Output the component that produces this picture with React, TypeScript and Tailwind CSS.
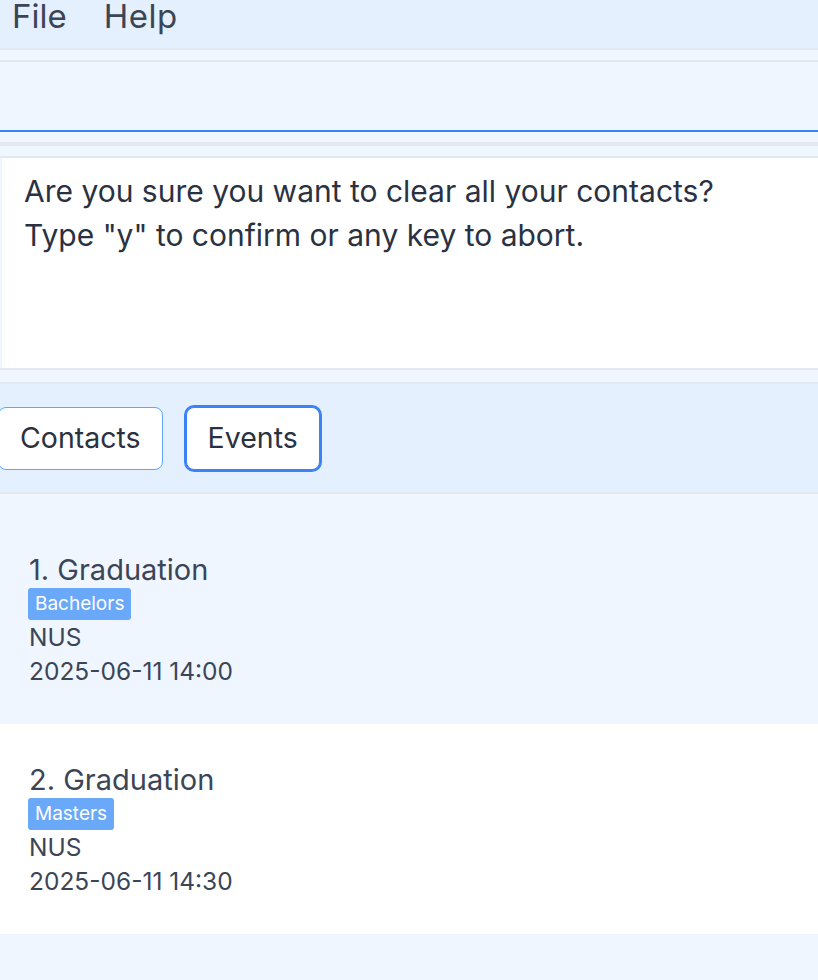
import React from 'react';

interface EventItem {
  title: string;
  tag: string;
  location: string;
  time: string;
}

const events: EventItem[] = [
  { title: 'Graduation', tag: 'Bachelors', location: 'NUS', time: '2025-06-11 14:00' },
  { title: 'Graduation', tag: 'Masters', location: 'NUS', time: '2025-06-11 14:30' },
];

export default function App() {
  return (
    <div
      className="w-[818px] h-[980px] overflow-hidden bg-[#eff6ff] text-[#334155]"
      style={{ fontFamily: 'Inter, "Noto Sans", sans-serif' }}
    >
      {/* menu bar */}
      <div className="h-[50px] bg-[#e4f0fd] border-b-2 border-[#e2e8f0] flex items-start gap-[37px] pl-[12px] text-[33px] leading-[36px] text-[#3b4556]">
        <span className="-mt-[2px]">File</span>
        <span className="-mt-[2px] tracking-[0.5px]">Help</span>
      </div>

      {/* command box */}
      <div className="pt-[10px]">
        <div className="border-t-2 border-[#e2e8f0] h-[72px] bg-[#eff6ff] border-b-2 border-b-[#3b82f6]"></div>
      </div>

      <div className="h-[10px]"></div>
      <div className="h-[4px] bg-[#e2e8f0]"></div>

      {/* result box */}
      <div className="pt-[10px]">
        <div className="border-t-2 border-b-2 border-[#e2e8f0]">
          <div className="h-[210px] bg-white border-l-2 border-[#eff6ff] pl-[22px] pt-[11px] text-[30px] leading-[44px] text-[#2a3242]">
            <div>Are you sure you want to clear all your contacts?</div>
            <div>Type "y" to confirm or any key to abort.</div>
          </div>
        </div>
      </div>

      {/* tabs */}
      <div className="pt-[12px]">
        <div className="border-t-2 border-b-2 border-[#e2e8f0] bg-[#e4f0fd] h-[112px] flex items-center gap-[23px] -ml-[2px]">
          <button className="h-[63px] px-[21px] bg-white border border-[#60a5fa] rounded-[8px] text-[28.5px] text-[#2a3242]">
            Contacts
          </button>
          <button className="h-[63px] px-[21px] bg-white border border-[#3b82f6] ring-2 ring-[#3b82f6] rounded-[8px] text-[28.5px] text-[#2a3242]">
            Events
          </button>
        </div>
      </div>

      {/* event list */}
      <div className="pt-[20px]">
        {events.map((ev, i) => (
          <div
            key={i}
            className={`h-[210px] pl-[29px] pt-[38px] ${i % 2 === 0 ? 'bg-[#eff6ff]' : 'bg-white'}`}
          >
            <div className="text-[29px] leading-[35px] text-[#3b4556]">
              {i + 1}. {ev.title}
            </div>
            <div className="mt-[1px] flex">
              <span className="-ml-px h-[32px] px-[7px] rounded-[3px] bg-[#6aa8f9] text-white text-[19px] leading-[32px]">
                {ev.tag}
              </span>
            </div>
            <div className="text-[24.5px] leading-[34px] text-[#3b4556]">{ev.location}</div>
            <div className="text-[24.5px] leading-[34px] text-[#3b4556]">{ev.time}</div>
          </div>
        ))}
      </div>
    </div>
  );
}
